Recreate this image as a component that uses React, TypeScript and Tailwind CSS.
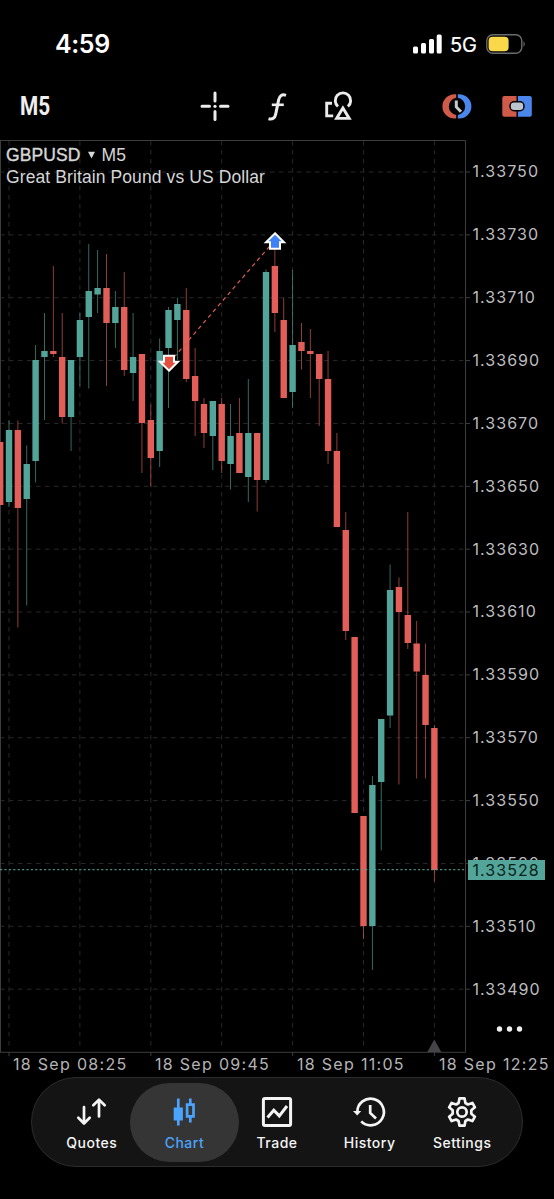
import type { ReactNode } from "react";
import { clsx } from "clsx";

type Candle = {
  high: number;
  top: number;
  bottom: number;
  low: number;
  up: boolean;
};

const c = (high: number, top: number, bottom: number, low: number, up: boolean): Candle => ({
  high,
  top,
  bottom,
  low,
  up,
});

const STEP = 8.862;
const FIRST_X = 0.15;
const CHART_TOP = 140;

const UP = "#52a598";
const DOWN = "#e15f58";

const candles: Candle[] = [
  c(442, 442, 505, 505, false),
  c(420.5, 430, 502, 507, true),
  c(420.5, 430, 508, 627.5, false),
  c(445.5, 464, 499, 605.5, true),
  c(345, 360, 461, 482.5, true),
  c(313, 351, 357, 420, true),
  c(266, 351, 354, 357, false),
  c(313, 357, 417, 423.5, false),
  c(360, 360, 417, 451, true),
  c(313, 320, 357, 386, true),
  c(244, 291, 317, 388.5, true),
  c(250, 288, 294.5, 313, true),
  c(254, 288, 323, 386, false),
  c(291, 307, 323, 348, true),
  c(272, 307, 370, 376, false),
  c(313, 357, 373, 401, true),
  c(354, 354, 423, 473, false),
  c(404.5, 420, 458, 486.5, false),
  c(338.5, 351, 451, 467, true),
  c(307, 310, 348, 408, true),
  c(297.5, 304, 320, 360, true),
  c(288, 310, 379, 382, false),
  c(348, 376, 401, 436, false),
  c(398, 404, 433, 448, false),
  c(401, 401, 436, 470, true),
  c(398, 404, 461, 473, false),
  c(404, 436, 464, 489.5, true),
  c(398, 433, 473, 473, false),
  c(379, 433, 477, 502, true),
  c(433, 433, 480, 511.5, false),
  c(269.5, 272, 480, 483, true),
  c(240, 266, 313, 332, false),
  c(297.5, 320, 398, 398, false),
  c(270, 345, 392, 408, true),
  c(323, 342, 351, 369.5, false),
  c(329, 351, 354, 398, false),
  c(354, 354, 379, 426, false),
  c(351, 379, 451, 464, false),
  c(433, 451, 527, 527, false),
  c(512, 530, 631, 640, false),
  c(637, 637, 813, 813, false),
  c(816, 816, 926, 939, false),
  c(776, 785, 926, 970, true),
  c(719, 719, 782, 850.5, true),
  c(564.5, 590, 715.5, 728, true),
  c(577.5, 587, 612, 784.5, false),
  c(512, 615, 643, 649, false),
  c(621, 643.5, 671.5, 778.5, false),
  c(643.5, 675, 725, 778.5, false),
  c(725, 728, 870, 881.5, false),
];

const prices = [
  "1.33750",
  "1.33730",
  "1.33710",
  "1.33690",
  "1.33670",
  "1.33650",
  "1.33630",
  "1.33610",
  "1.33590",
  "1.33570",
  "1.33550",
  "1.33530",
  "1.33510",
  "1.33490",
];

const times = ["18 Sep 08:25", "18 Sep 09:45", "18 Sep 11:05", "18 Sep 12:25"];

function StatusBar() {
  return (
    <div className="flex h-[72px] items-end justify-between pr-[28px] pl-[55px] pb-[13px] text-white">
      <span className="text-[25px] leading-[30px] font-semibold tracking-[-0.4px]">4:59</span>
      <div className="flex h-[30px] items-center">
        <svg width="29" height="20" viewBox="0 0 29 20" fill="#fff">
          <rect x="0" y="12.5" width="5" height="7" rx="1.5" />
          <rect x="8" y="9" width="5" height="10.5" rx="1.5" />
          <rect x="16" y="5" width="5" height="14.5" rx="1.5" />
          <rect x="23.7" y="0.5" width="5" height="19" rx="1.5" />
        </svg>
        <span className="ml-[8px] w-[36px] pt-px text-[20px] leading-[30px] tracking-[-0.1px] [-webkit-text-stroke:0.2px_#fff]">
          5G
        </span>
        <svg width="40" height="20" viewBox="0 0 40 20" fill="none">
          <rect x="0.8" y="0.8" width="35" height="18.4" rx="6" stroke="#6b6b6b" strokeWidth="1.4" />
          <rect x="2.6" y="2.8" width="20" height="14.4" rx="4" fill="#f9d84a" />
          <path d="M37.5 7.2c1.6.6 1.6 5 0 5.6z" fill="#6b6b6b" />
        </svg>
      </div>
    </div>
  );
}

function Toolbar() {
  return (
    <div className="flex h-[68px] items-center pl-[20px]">
      <div className="w-[179px]">
        <span className="inline-block origin-left translate-y-px scale-x-[0.8] font-['Roboto'] text-[26px] leading-none font-bold text-[#efefef]">
          M5
        </span>
      </div>
      <svg width="32" height="32" viewBox="0 0 32 32" stroke="#ececec" strokeWidth="3" strokeLinecap="round">
        <path d="M16 3v8M16 21.500v8M3 16.300h7.500M21.500 16.300h7.500" />
        <circle cx="16" cy="16.300" r="1.600" fill="#ececec" stroke="none" />
      </svg>
      <svg
        className="ml-[35px]"
        width="22"
        height="32"
        viewBox="0 0 22 32"
        fill="none"
        stroke="#ececec"
        strokeWidth="3"
      >
        <path d="M20 5.300c-4-1.400-6.400.3-7.300 4.300l-3 14.500c-.8 4-3.200 5.800-7.200 4.600" />
        <path d="M5.800 14.800h12" strokeWidth="2.600" />
      </svg>
      <svg
        className="ml-[36px]"
        width="30"
        height="32"
        viewBox="0 0 30 32"
        fill="none"
        stroke="#ececec"
        strokeWidth="2.900"
      >
        <path d="M8 13.300H2.700v12.600h6.500" />
        <path d="M14 16.500a7.700 7.700 0 1 1 9.900 0" />
        <path d="M18.900 18l6.300 10.400H12.600z" />
      </svg>
      <svg className="ml-[87px]" width="32" height="32" viewBox="0 0 32 32" fill="none">
        <path d="M15.200 4.200h-1.600a12.200 12.200 0 0 0 0 24.400h1.600v-3.600a8.700 8.700 0 0 1 0-17.200z" fill="#d15b4a" />
        <path d="M16.800 4.200h1.400a12.200 12.200 0 0 1 0 24.400h-1.400v-3.600a8.700 8.700 0 0 0 0-17.200z" fill="#4a86ec" />
        <path d="M15.300 10.500v6.500l4.700 4.800" stroke="#c5c9d0" strokeWidth="3" />
      </svg>
      <svg className="ml-[29px]" width="32" height="32" viewBox="0 0 32 32" fill="none">
        <path d="M14.500 6H2.300a2 2 0 0 0-2 2v16.700a2 2 0 0 0 2 2h12.200z" fill="#d15b4a" />
        <path d="M15.900 6h11.900a2 2 0 0 1 2 2v16.700a2 2 0 0 1-2 2H15.900z" fill="#4a86ec" />
        <rect x="7.300" y="11" width="15.400" height="10.400" rx="4.800" fill="#000" />
        <rect x="8.800" y="12.500" width="12.400" height="7.400" rx="3.200" fill="#bcc4d0" />
      </svg>
    </div>
  );
}

function CandleChart() {
  const columns = [0, 1, 2, 3, 4, 5, 6].map((i) => 9 + i * 70.9);

  return (
    <svg width="472" height="918" viewBox={`0 ${CHART_TOP} 472 918`} fill="none">
      {/* grid */}
      <g stroke="#28282b" strokeWidth="1" strokeDasharray="4.500 4.500">
        {prices.map((price, i) => (
          <path key={price} d={`M0 ${172 + i * 62.86}H465`} />
        ))}
        {columns.map((x) => (
          <path key={x} d={`M${x} 141V1049`} />
        ))}
      </g>

      {/* frame and ticks */}
      <g stroke="#3d3d3f" strokeWidth="1">
        <path d="M0 140.500H465.500V1052.300H0M0.500 141V1052" />
        {prices.map((price, i) => (
          <path key={price} d={`M466 ${172 + i * 62.86}h4`} />
        ))}
        {columns
          .filter((_, i) => i % 2 === 0)
          .map((x) => (
            <path key={x} d={`M${x} 1052v4`} />
          ))}
      </g>
      <path d="M434.300 1039.500l7 12.500h-14z" fill="#454547" />

      {/* candles */}
      {candles.map((candle, i) => {
        const x = FIRST_X + i * STEP;
        const color = candle.up ? UP : DOWN;
        return (
          <g key={i} fill={color}>
            <rect x={x - 0.45} y={candle.high} width="0.9" height={candle.low - candle.high} opacity="0.7" />
            <rect x={x - 3.2} y={candle.top} width="6.4" height={candle.bottom - candle.top} />
          </g>
        );
      })}

      {/* current price */}
      <path d="M0 869.700H465" stroke={UP} strokeWidth="1.300" strokeDasharray="2.200 2.200" opacity="0.85" />

      {/* closed deal */}
      <path d="M169 363L275 240" stroke="#dc5f50" strokeWidth="1.200" strokeDasharray="4 3.500" />
      <path
        d="M275 233.300l9 9h-4v6.400h-10v-6.400h-4z"
        fill="#3f82f5"
        stroke="#fff"
        strokeWidth="2"
      />
      <path
        d="M169 370.700l9-9h-4v-6h-10v6h-4z"
        fill="#e2513d"
        stroke="#fff"
        strokeWidth="2"
      />
    </svg>
  );
}

function PriceAxis() {
  return (
    <div className="relative flex w-[82px] flex-col text-[16px] tracking-[1.050px] text-[#bdbdbf]">
      {prices.map((price) => (
        <span key={price} className="flex h-[62.86px] shrink-0 items-center pl-[0.500px]">
          {price}
        </span>
      ))}
      <svg className="mt-[-1px] ml-[24px]" width="28" height="20" viewBox="0 0 28 20" fill="#efefef">
        <circle cx="3.500" cy="10" r="2.700" />
        <circle cx="13.500" cy="10" r="2.700" />
        <circle cx="23.500" cy="10" r="2.700" />
      </svg>
      <span className="absolute top-[720px] left-[-4px] flex h-[20px] w-[77px] items-center bg-[#52a598] pl-[4.500px] text-[#0b1f1c]">
        1.33528
      </span>
    </div>
  );
}

function ChartPanel() {
  return (
    <div className="relative flex h-[912px] shrink-0">
      <CandleChart />
      <PriceAxis />
      <div className="absolute top-[4px] left-[6px] font-['Liberation_Sans'] text-[17.500px] leading-[22px] tracking-[0.100px] text-[#d6d6d6]">
        <p className="flex items-center">
          <span className="font-medium [-webkit-text-stroke:0.4px_#d6d6d6]">GBPUSD</span>
          <svg className="mx-[7px]" width="7" height="8" viewBox="0 0 7 8" fill="#d6d6d6">
            <path d="M0 0.800h7L3.500 7.500z" />
          </svg>
          <span>M5</span>
        </p>
        <p>Great Britain Pound vs US Dollar</p>
      </div>
    </div>
  );
}

function TimeAxis() {
  return (
    <div className="flex h-[25px] shrink-0 overflow-hidden pl-[13px] text-[16px] leading-[25px] tracking-[1.300px] whitespace-nowrap text-[#b4b4b6]">
      {times.map((time) => (
        <span key={time} className="w-[142px] shrink-0">
          {time}
        </span>
      ))}
    </div>
  );
}

function NavItem({ label, active, children }: { label: string; active?: boolean; children: ReactNode }) {
  return (
    <button
      className={clsx(
        "flex h-[79px] shrink-0 flex-col items-center pt-[12px]",
        active ? "mx-[-8.200px] w-[109px] rounded-[40px] bg-[#353535] text-[#4ba3fb]" : "w-[92.600px] text-[#f4f4f4]"
      )}
    >
      <svg width="34" height="34" viewBox="0 0 34 34" fill="none" stroke="currentColor" strokeWidth="2.700">
        {children}
      </svg>
      <span className="mt-[4px] text-[14px] leading-[20px] font-medium tracking-[0.5px]">{label}</span>
    </button>
  );
}

function BottomNav() {
  return (
    <nav className="mx-auto flex h-[90px] w-[492px] shrink-0 items-center justify-center rounded-[45px] border border-[#2c2c2c] bg-[#141414]">
      <NavItem label="Quotes">
        <g strokeLinecap="round" strokeLinejoin="round">
          <path d="M9 12v16M3.300 22.800L9 28.500l5.700-5.700" />
          <path d="M24 21.500V5M18.300 10.300L24 4.600l5.700 5.700" />
        </g>
      </NavItem>
      <NavItem label="Chart" active>
        <path d="M11.300 3.500v27" />
        <path d="M6.700 12.500h9.200v13H6.700z" fill="currentColor" stroke="none" />
        <path d="M23.300 3.500v6M23.300 22v5.500M20.100 9.700h6.400v11.600h-6.400z" />
      </NavItem>
      <NavItem label="Trade">
        <rect x="3.400" y="3.400" width="27.200" height="27.200" rx="1.500" strokeWidth="3" />
        <path d="M7.500 22.500l6.300-7.300 5.500 5.700L27 11" strokeWidth="3" />
      </NavItem>
      <NavItem label="History">
        <path d="M4.300 17A13.300 13.300 0 1 1 8.200 26.400" />
        <path d="M0 16h8.200L4.200 20.500z" fill="currentColor" stroke="none" />
        <path d="M17.200 10v8l5.800 5.500" />
      </NavItem>
      <NavItem label="Settings">
        <path
          strokeLinejoin="round"
          d="M14.500 3.300h5l.9 4.700 2.500 1.500 4.500-1.600 2.500 4.400-3.600 3v3.400l3.600 3-2.500 4.400-4.500-1.600-2.500 1.500-.9 4.700h-5l-.9-4.700-2.500-1.500-4.500 1.600-2.500-4.400 3.600-3v-3.400l-3.600-3 2.500-4.400 4.500 1.600L13.600 8z"
        />
        <circle cx="17" cy="17" r="4.700" />
      </NavItem>
    </nav>
  );
}

export default function App() {
  return (
    <div className="flex h-[1199px] w-[554px] flex-col overflow-hidden bg-black font-['Inter',sans-serif]">
      <StatusBar />
      <Toolbar />
      <ChartPanel />
      <TimeAxis />
      <BottomNav />
    </div>
  );
}
